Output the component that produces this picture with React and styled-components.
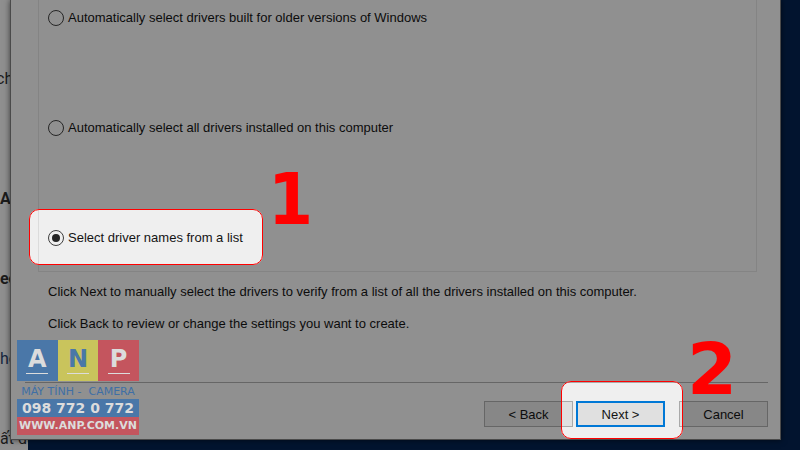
import React from 'react'
import styled, { createGlobalStyle } from 'styled-components';

const GlobalStyle = createGlobalStyle`
  * {
    box-sizing: border-box;
  }
  body {
    margin: 0;
    background-color: #02142f;
  }
`;

const Desktop = styled.div`
  position: relative;
  min-height: 100vh;
  padding: 0 19px 11px 10px;
  overflow: hidden;
  background-color: #02142f;
  font-family: "Liberation Sans", Arial, sans-serif;
  font-size: 13px;
  color: #0c0c0c;
`;

const Article = styled.div`
  position: absolute;
  top: 0;
  bottom: 0;
  left: -4px;
  width: 32px;
  padding-top: 58px;
  overflow: hidden;
  display: grid;
  grid-auto-rows: 40px;
  align-items: center;
  background-color: #8f8f8f;
  font-family: Roboto, sans-serif;
  font-size: 16px;
`;

const Line = styled.span`
  grid-row: ${props => props.$row};
  white-space: pre;
  font-weight: ${props => (props.$bold ? 700 : 400)};
  color: ${props => (props.$link ? '#16283f' : '#1c1c1c')};
`;

const Dialog = styled.form`
  position: relative;
  padding: 0 12px 12px 14px;
  border: 1px solid #4a4a4a;
  border-top: 0;
  background-color: #909090;
  box-shadow: 0 0 6px rgba(0,0,0,0.6);
`;

const Group = styled.fieldset`
  display: flex;
  flex-direction: column;
  align-items: flex-start;
  gap: 90px;
  min-width: 0;
  margin: 0 11px 0 13px;
  padding: 8px 9px 23px;
  border: 1px solid #848484;
  border-top: 0;
`;

const Option = styled.div`
  position: relative;
  display: flex;
  align-items: center;
  gap: 4px;
  height: 20px;
  label {
    line-height: 20px;
    white-space: nowrap;
  }
`;

const Radio = styled.input`
  appearance: none;
  display: grid;
  place-items: center;
  width: 16px;
  height: 16px;
  margin: 0;
  border: 1px solid #262626;
  border-radius: 50%;
  &:checked::before {
    content: '';
    width: 8px;
    height: 8px;
    border-radius: 50%;
    background-color: #161616;
  }
`;

const Notes = styled.div`
  display: flex;
  flex-direction: column;
  gap: 12px;
  padding: 10px 23px 48px;
  p {
    margin: 0;
    line-height: 20px;
  }
`;

const Footer = styled.div`
  display: flex;
  justify-content: flex-end;
  gap: 14px;
  padding-top: 18px;
  border-top: 1px solid #666666;
`;

const Steps = styled.div`
  display: flex;
  gap: 3px;
`;

const NextSlot = styled.div`
  position: relative;
`;

const Button = styled.button`
  display: block;
  width: 89px;
  height: 26px;
  padding: 0;
  border: ${props => (props.$primary ? '2px solid #004881' : '1px solid #666666')};
  background-color: #878787;
  font: inherit;
  color: inherit;
`;

const Spotlight = styled.div`
  position: absolute;
  z-index: 2;
  top: ${props => props.$top}px;
  left: ${props => props.$left}px;
  width: ${props => props.$width}px;
  height: ${props => props.$height}px;
  border: 1px solid #ff0000;
  border-radius: 10px;
  backdrop-filter: brightness(1.66);
  pointer-events: none;
`;

const StepNumber = styled.span`
  position: absolute;
  z-index: 3;
  top: ${props => props.$top}px;
  left: ${props => props.$left}px;
  font-family: ${props => (props.$wide ? '"DejaVu Sans"' : '"DejaVu Sans Condensed"')}, Verdana, sans-serif;
  font-size: 72px;
  font-weight: 700;
  line-height: 56px;
  color: #ff0000;
  pointer-events: none;
`;

const Logo = styled.div`
  position: absolute;
  z-index: 4;
  left: 17px;
  bottom: 16px;
  width: 122px;
  font-family: "DejaVu Sans", Verdana, sans-serif;
  font-weight: 700;
  text-align: center;
  white-space: nowrap;
  color: #dcdcdc;
`;

const Tiles = styled.div`
  display: grid;
  grid-template-columns: repeat(3, 1fr);
`;

const Tile = styled.span`
  display: flex;
  flex-direction: column;
  align-items: center;
  justify-content: center;
  height: 41px;
  background-color: ${props => props.$bg};
  color: ${props => props.$color};
  font-size: 24px;
  line-height: 22px;
  &::after {
    content: '';
    width: 22px;
    height: 1px;
    margin-top: 3px;
    background-color: #dcdcdc;
  }
`;

const Tagline = styled.div`
  display: flex;
  justify-content: center;
  padding-top: 4px;
  font-size: 11px;
  font-weight: 400;
  line-height: 14px;
  color: #3f6fa5;
`;

const Band = styled.div`
  height: 18px;
  background-color: ${props => props.$bg};
  font-size: ${props => props.$size}px;
  line-height: 18px;
`;

const lines = [
  { row: 1, text: 'ch' },
  { row: 4, text: ' A', bold: true },
  { row: 6, text: ' ec', bold: true },
  { row: 8, text: ' ho', link: true },
  { row: 10, text: ' ất dư' },
];

const App = () => (
  <Desktop>
    <GlobalStyle />
    <Article>
      {lines.map(line => (
        <Line key={line.row} $row={line.row} $bold={line.bold} $link={line.link}>{line.text}</Line>
      ))}
    </Article>
    <Dialog onSubmit={event => event.preventDefault()}>
      <Group>
        <Option>
          <Radio type="radio" name="task" id="older" />
          <label htmlFor="older">Automatically select drivers built for older versions of Windows</label>
        </Option>
        <Option>
          <Radio type="radio" name="task" id="all" />
          <label htmlFor="all">Automatically select all drivers installed on this computer</label>
        </Option>
        <Option>
          <Radio type="radio" name="task" id="list" defaultChecked />
          <label htmlFor="list">Select driver names from a list</label>
          <Spotlight $top={-19} $left={-19} $width={234} $height={56} />
          <StepNumber $top={-57} $left={220}>1</StepNumber>
        </Option>
      </Group>
      <Notes>
        <p>Click Next to manually select the drivers to verify from a list of all the drivers installed on this computer.</p>
        <p>Click Back to review or change the settings you want to create.</p>
      </Notes>
      <Footer>
        <Steps>
          <Button type="button">&lt; Back</Button>
          <NextSlot>
            <Button type="submit" $primary>Next &gt;</Button>
            <Spotlight $top={-20} $left={-15} $width={122} $height={58} />
            <StepNumber $top={-60} $left={111} $wide>2</StepNumber>
          </NextSlot>
        </Steps>
        <Button type="button">Cancel</Button>
      </Footer>
    </Dialog>
    <Logo>
      <Tiles>
        <Tile $bg="#4a77a8" $color="#dcdcdc">A</Tile>
        <Tile $bg="#c9c45c" $color="#4a77a8">N</Tile>
        <Tile $bg="#c4555e" $color="#dcdcdc">P</Tile>
      </Tiles>
      <Tagline>MÁY TÍNH -&nbsp; CAMERA</Tagline>
      <Band $bg="#4a77a8" $size={14}>098 772 0 772</Band>
      <Band $bg="#c4555e" $size={11}>WWW.ANP.COM.VN</Band>
    </Logo>
  </Desktop>
)

export default App
